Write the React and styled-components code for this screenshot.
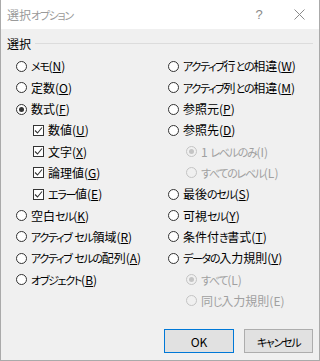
import React from 'react'
import styled, { createGlobalStyle } from 'styled-components'

const GlobalStyle = createGlobalStyle`
  html, body {
    margin: 0;
    padding: 0;
    background: #ffffff;
  }
  body {
    font-family: 'Noto Sans CJK JP', 'Noto Sans', sans-serif;
    font-feature-settings: 'palt';
    font-size: 12px;
    color: #000;
  }
`

const StWindow = styled.div`
  width: 320px;
  height: 361px;
  box-sizing: border-box;
  display: flex;
  flex-direction: column;
  border: 1px solid #aaaaaa;
  border-top: none;
  background: #f0f0f0;
`
const StTitleBar = styled.div`
  height: 29px;
  flex-shrink: 0;
  display: flex;
  align-items: center;
  background: #ffffff;
  padding-left: 6px;
`
const StTitle = styled.span`
  flex: 1;
  color: #9a9a9a;
  font-size: 12px;
  line-height: 1;
`
const StTitleButton = styled.span`
  width: 40px;
  height: 29px;
  display: flex;
  align-items: center;
  justify-content: center;
  color: #8a8a8a;
  font-family: 'Liberation Sans', sans-serif;
  font-size: 13px;
`
const StBody = styled.div`
  flex: 1;
  display: flex;
  flex-direction: column;
  padding: 7px 6px 7px 6px;
`
const StGroupHeader = styled.div`
  display: flex;
  align-items: center;
  height: 14px;
  gap: 4px;

  &::after {
    content: '';
    flex: 1;
    height: 1px;
    background: #dcdcdc;
  }
`
const StColumns = styled.div`
  display: grid;
  grid-template-columns: 152px 1fr;
  margin: 5.7px 0 0 9px;
`
const StColumn = styled.div`
  display: flex;
  flex-direction: column;
`
const StOption = styled.div`
  height: 21.33px;
  display: flex;
  align-items: center;
  gap: 4px;
  padding-left: ${p => p.$indent || 0}px;
  color: ${p => (p.$disabled ? '#a0a0a0' : '#000')};
  white-space: nowrap;
  line-height: 1;
`
const StRadio = styled.span`
  width: 11px;
  height: 11px;
  flex-shrink: 0;
  border-radius: 50%;
  box-sizing: border-box;
  border: 1px solid ${p => (p.$disabled ? '#c4c4c4' : '#333333')};
  background: ${p => (p.$disabled ? '#f0f0f0' : '#ffffff')};
  display: flex;
  align-items: center;
  justify-content: center;

  &::after {
    content: '';
    display: ${p => (p.$checked ? 'block' : 'none')};
    width: 5px;
    height: 5px;
    border-radius: 50%;
    background: ${p => (p.$disabled ? '#c4c4c4' : '#333333')};
  }
`
const StCheck = styled.span`
  width: 11px;
  height: 11px;
  flex-shrink: 0;
  box-sizing: border-box;
  border: 1px solid #333333;
  background: #ffffff;
  display: flex;
  align-items: center;
  justify-content: center;
`
const StKana = styled.span`
  font-size: 11px;
  letter-spacing: -1.3px;
`
const StKey = styled.span`
  text-decoration: ${p => (p.$disabled ? 'none' : 'underline')};
  text-underline-offset: 1px;
`
const StButtons = styled.div`
  margin-top: auto;
  display: flex;
  justify-content: flex-end;
  gap: 10px;
`
const StButton = styled.button`
  width: ${p => p.$width}px;
  height: 24px;
  box-sizing: border-box;
  border: 1px solid ${p => (p.$primary ? '#0078d7' : '#adadad')};
  background: #e1e1e1;
  font-family: inherit;
  font-feature-settings: 'palt';
  font-size: 12px;
  color: #000;
  padding: 0;
`

// kana in the reference font is narrower than in Noto, so tighten those runs
const Narrow = ({ children }) =>
  children
    .split(/([\u3040-\u30ff]+)/)
    .map((part, i) =>
      /[\u3040-\u30ff]/.test(part) ? <StKana key={i}>{part}</StKana> : part
    )

const Label = ({ text, k, disabled }) => (
  <span>
    <Narrow>{text}</Narrow>(<StKey $disabled={disabled}>{k}</StKey>)
  </span>
)

const Radio = ({ text, k, checked, disabled, indent }) => (
  <StOption $disabled={disabled} $indent={indent}>
    <StRadio $checked={checked} $disabled={disabled} />
    <Label text={text} k={k} disabled={disabled} />
  </StOption>
)

const Check = ({ text, k, indent }) => (
  <StOption $indent={indent}>
    <StCheck>
      <svg width='9' height='9' viewBox='0 0 9 9'>
        <path d='M1 4.5 L3.5 7 L8 1.5' fill='none' stroke='#333' strokeWidth='1.1' />
      </svg>
    </StCheck>
    <Label text={text} k={k} />
  </StOption>
)

const App = () => (
  <>
    <GlobalStyle />
    <StWindow>
      <StTitleBar>
        <StTitle>
          <Narrow>選択オプション</Narrow>
        </StTitle>
        <StTitleButton>?</StTitleButton>
        <StTitleButton>
          <svg width='11' height='11' viewBox='0 0 11 11'>
            <path d='M0.5 0.5 L10.5 10.5 M10.5 0.5 L0.5 10.5' stroke='#8a8a8a' strokeWidth='1' />
          </svg>
        </StTitleButton>
      </StTitleBar>
      <StBody>
        <StGroupHeader>選択</StGroupHeader>
        <StColumns>
          <StColumn>
            <Radio text='メモ' k='N' />
            <Radio text='定数' k='O' />
            <Radio text='数式' k='F' checked />
            <Check text='数値' k='U' indent={17} />
            <Check text='文字' k='X' indent={17} />
            <Check text='論理値' k='G' indent={17} />
            <Check text='エラー値' k='E' indent={17} />
            <Radio text='空白セル' k='K' />
            <Radio text='アクティブ セル領域' k='R' />
            <Radio text='アクティブ セルの配列' k='A' />
            <Radio text='オブジェクト' k='B' />
          </StColumn>
          <StColumn>
            <Radio text='アクティブ行との相違' k='W' />
            <Radio text='アクティブ列との相違' k='M' />
            <Radio text='参照元' k='P' />
            <Radio text='参照先' k='D' />
            <Radio text='1 レベルのみ' k='I' checked disabled indent={18} />
            <Radio text='すべてのレベル' k='L' disabled indent={18} />
            <Radio text='最後のセル' k='S' />
            <Radio text='可視セル' k='Y' />
            <Radio text='条件付き書式' k='T' />
            <Radio text='データの入力規則' k='V' />
            <Radio text='すべて' k='L' checked disabled indent={18} />
            <Radio text='同じ入力規則' k='E' disabled indent={18} />
          </StColumn>
        </StColumns>
        <StButtons>
          <StButton $primary $width={70}>OK</StButton>
          <StButton $width={69}>
            <Narrow>キャンセル</Narrow>
          </StButton>
        </StButtons>
      </StBody>
    </StWindow>
  </>
)

export default App
